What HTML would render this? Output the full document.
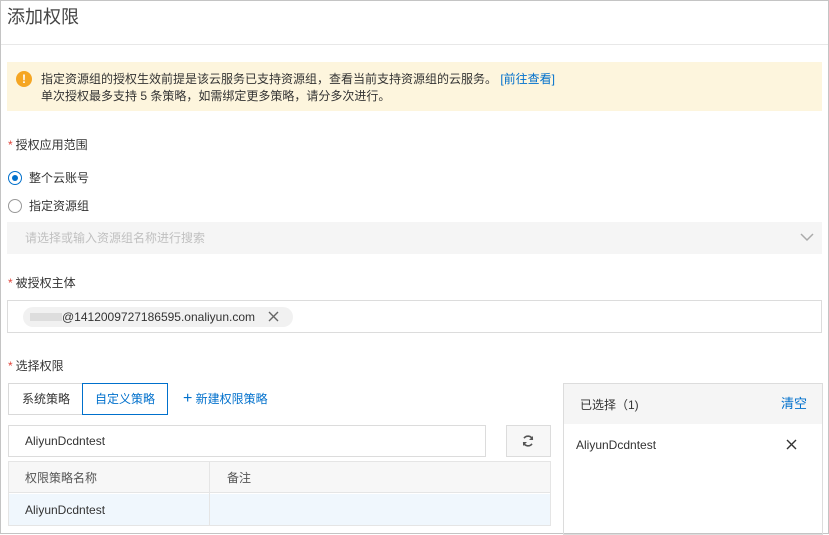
<!DOCTYPE html>
<html><head><meta charset="utf-8"><style>
*{box-sizing:border-box;margin:0;padding:0}
body{width:829px;height:534px;overflow:hidden;background:#fff;font-family:"Liberation Sans","Noto Sans CJK SC",sans-serif;font-size:12px;color:#333;position:relative}
.frame{position:absolute;left:0;top:0;width:829px;height:534px;border:1px solid #c4c4c4;border-top-color:#c4c4c4}
.a{position:absolute;white-space:nowrap}
.req{color:#e0443a;margin-right:3px}
</style></head><body>
<div class="frame"></div>
<div class="a" style="left:7px;top:4px;font-size:18px;color:#444;line-height:26px">添加权限</div>
<div class="a" style="left:1px;top:44px;width:827px;height:1px;background:#e8e8e8"></div>

<div class="a" style="left:7px;top:62px;width:815px;height:49px;background:#fdf5dd"></div>
<div class="a" style="left:16px;top:71px;width:16px;height:16px;border-radius:50%;background:#f5a623;color:#fff;font-weight:bold;font-size:12px;text-align:center;line-height:16px">!</div>
<div class="a" style="left:41px;top:71px;line-height:17px;color:#333">指定资源组的授权生效前提是该云服务已支持资源组，查看当前支持资源组的云服务。 <span style="color:#0070cc">[前往查看]</span><br>单次授权最多支持 5 条策略，如需绑定更多策略，请分多次进行。</div>

<div class="a" style="left:8px;top:137px;line-height:17px"><span class="req">*</span>授权应用范围</div>
<div class="a" style="left:8px;top:171px;width:14px;height:14px;border-radius:50%;border:1px solid #0070cc"><div style="position:absolute;left:3px;top:3px;width:6px;height:6px;border-radius:50%;background:#0070cc"></div></div>
<div class="a" style="left:29px;top:170px;line-height:17px">整个云账号</div>
<div class="a" style="left:8px;top:199px;width:14px;height:14px;border-radius:50%;border:1px solid #999"></div>
<div class="a" style="left:29px;top:198px;line-height:17px">指定资源组</div>
<div class="a" style="left:7px;top:222px;width:815px;height:32px;background:#f5f5f5"></div>
<div class="a" style="left:25px;top:230px;line-height:17px;color:#c0c0c0">请选择或输入资源组名称进行搜索</div>
<svg class="a" style="left:800px;top:232px" width="14" height="10"><path d="M1 2 L7 8 L13 2" fill="none" stroke="#aaa" stroke-width="1.5"/></svg>

<div class="a" style="left:8px;top:275px;line-height:17px"><span class="req">*</span>被授权主体</div>
<div class="a" style="left:7px;top:300px;width:815px;height:33px;border:1px solid #dcdcdc"></div>
<div class="a" style="left:23px;top:307px;width:270px;height:20px;border-radius:10px;background:#f1f1f1"></div>
<div class="a" style="left:30px;top:313px;width:32px;height:8px;background:#ddd"></div>
<div class="a" style="left:62px;top:309px;line-height:16px;color:#333">@1412009727186595.onaliyun.com</div>
<svg class="a" style="left:268px;top:311px" width="11" height="11"><path d="M1 1L10 10M10 1L1 10" stroke="#666" stroke-width="1.4"/></svg>

<div class="a" style="left:8px;top:358px;line-height:17px"><span class="req">*</span>选择权限</div>
<div class="a" style="left:8px;top:383px;width:75px;height:32px;border:1px solid #d9d9d9;border-right:none;line-height:30px;text-align:center">系统策略</div>
<div class="a" style="left:82px;top:383px;width:86px;height:32px;border:1px solid #0070cc;line-height:30px;text-align:center;color:#0070cc">自定义策略</div>
<div class="a" style="left:183px;top:390px;line-height:17px;color:#0070cc"><span style="font-size:16px">+</span> 新建权限策略</div>

<div class="a" style="left:8px;top:425px;width:478px;height:32px;border:1px solid #dcdcdc;padding-left:16px;line-height:30px">AliyunDcdntest</div>
<div class="a" style="left:506px;top:425px;width:45px;height:32px;border:1px solid #dcdcdc;background:#f7f7f7"></div>
<svg class="a" style="left:521px;top:434px" width="14" height="14" viewBox="0 0 14 14"><path d="M11.5 5.5A4.8 4.8 0 0 0 3 4.2M2.5 8.5A4.8 4.8 0 0 0 11 9.8" fill="none" stroke="#555" stroke-width="1.6"/><path d="M12 2v4H8z" fill="#555"/><path d="M2 12V8h4z" fill="#555"/></svg>

<div class="a" style="left:8px;top:461px;width:543px;height:65px;border:1px solid #e5e5e5"></div>
<div class="a" style="left:9px;top:462px;width:541px;height:31px;background:#f7f7f7;border-bottom:1px solid #e5e5e5"></div>
<div class="a" style="left:9px;top:494px;width:541px;height:31px;background:#f0f7fd"></div>
<div class="a" style="left:209px;top:462px;width:1px;height:63px;background:#e5e5e5"></div>
<div class="a" style="left:25px;top:470px;line-height:17px;color:#555">权限策略名称</div>
<div class="a" style="left:227px;top:470px;line-height:17px;color:#555">备注</div>
<div class="a" style="left:25px;top:502px;line-height:17px">AliyunDcdntest</div>

<div class="a" style="left:563px;top:383px;width:260px;height:152px;border:1px solid #dcdcdc"></div>
<div class="a" style="left:564px;top:384px;width:258px;height:40px;background:#f5f5f5"></div>
<div class="a" style="left:580px;top:397px;line-height:17px">已选择（1)</div>
<div class="a" style="left:781px;top:395px;line-height:17px;color:#0070cc;font-size:13px">清空</div>
<div class="a" style="left:576px;top:437px;line-height:17px">AliyunDcdntest</div>
<svg class="a" style="left:786px;top:439px" width="11" height="11"><path d="M1 1L10 10M10 1L1 10" stroke="#333" stroke-width="1.4"/></svg>
</body></html>
